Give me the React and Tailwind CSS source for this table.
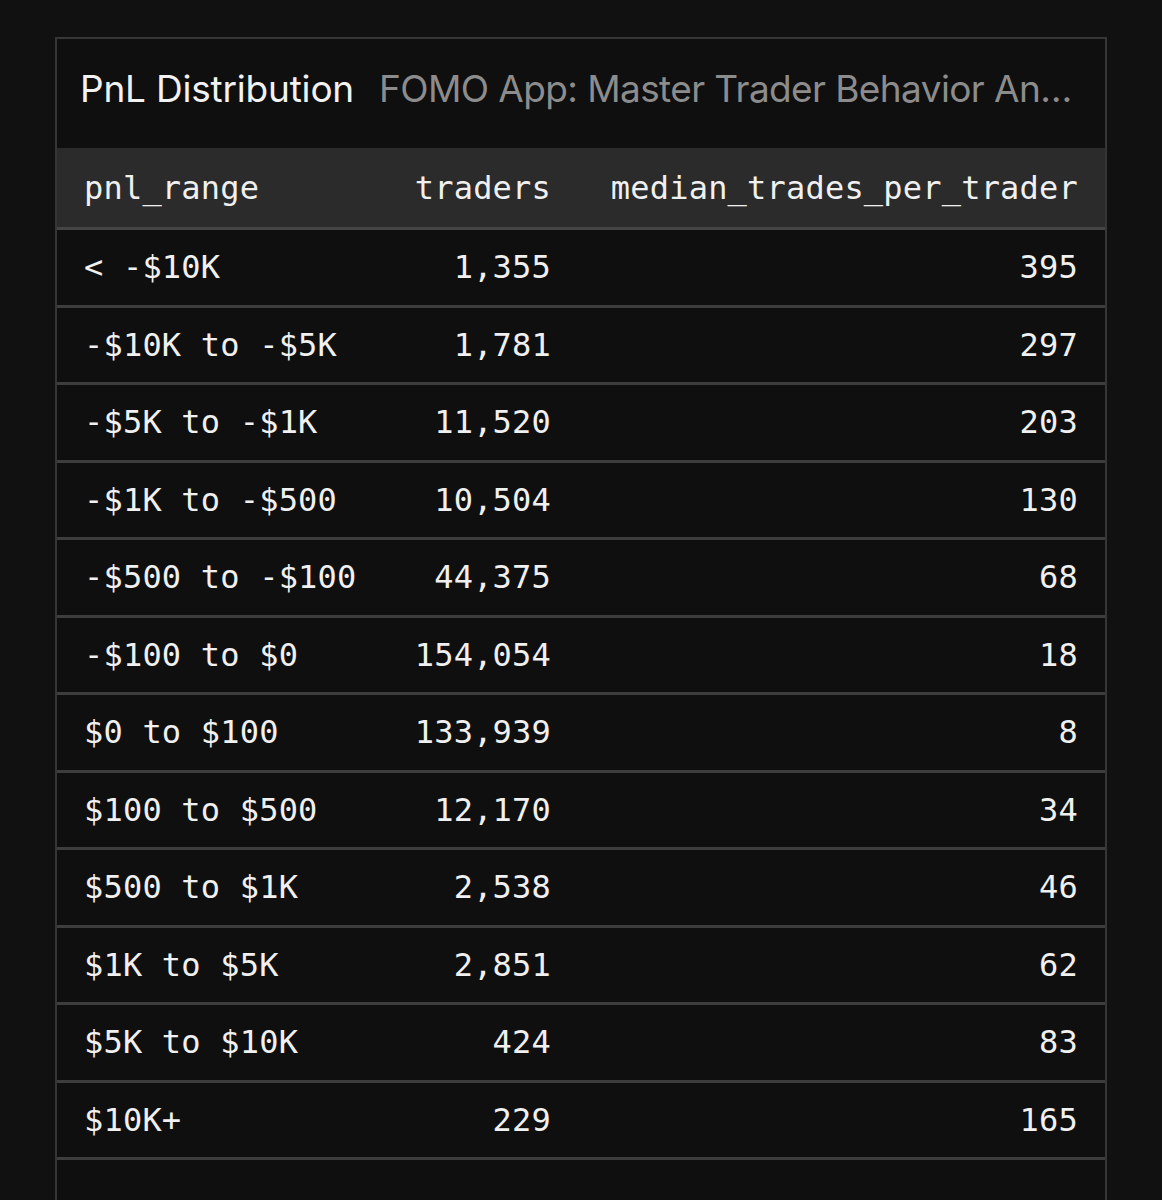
const rows = [
  ['< -$10K', '1,355', '395'],
  ['-$10K to -$5K', '1,781', '297'],
  ['-$5K to -$1K', '11,520', '203'],
  ['-$1K to -$500', '10,504', '130'],
  ['-$500 to -$100', '44,375', '68'],
  ['-$100 to $0', '154,054', '18'],
  ['$0 to $100', '133,939', '8'],
  ['$100 to $500', '12,170', '34'],
  ['$500 to $1K', '2,538', '46'],
  ['$1K to $5K', '2,851', '62'],
  ['$5K to $10K', '424', '83'],
  ['$10K+', '229', '165'],
];

const App = () => {
  return (
    <div className="min-h-[1200px] bg-[#111111] pt-[37px] pl-[55px] overflow-hidden">
      <div className="w-[1052px] border-2 border-b-0 border-[#363636] bg-[#0f0f0f] min-h-[1200px]">
        <div className="h-[109px] flex items-center pl-[23px] pr-[20px] pb-[10px] gap-[25px] font-['Inter',sans-serif] text-[37px] whitespace-nowrap">
          <span className="text-[#f2f2f2] shrink-0 tracking-[-0.2px]">PnL Distribution</span>
          <span className="text-[#8c8c8c] truncate tracking-[-0.6px]">FOMO App: Master Trader Behavior Analysis</span>
        </div>

        <div className="font-['DejaVu_Sans_Mono',monospace] text-[32px] tracking-[0.2px] text-[#f0f0f0]">
          <div className="grid grid-cols-[290px_177px_1fr] h-[82px] items-center bg-[#2b2b2b] border-b-[3px] border-[#454545] px-[27px]">
            <div>pnl_range</div>
            <div className="text-right">traders</div>
            <div className="text-right">median_trades_per_trader</div>
          </div>
          {rows.map((r) => (
            <div
              key={r[0]}
              className="grid grid-cols-[290px_177px_1fr] h-[77.5px] items-center border-b-[3px] border-[#3d3d3d] px-[27px]"
            >
              <div className="whitespace-pre">{r[0]}</div>
              <div className="text-right">{r[1]}</div>
              <div className="text-right">{r[2]}</div>
            </div>
          ))}
        </div>
      </div>
    </div>
  );
};

export default App;
